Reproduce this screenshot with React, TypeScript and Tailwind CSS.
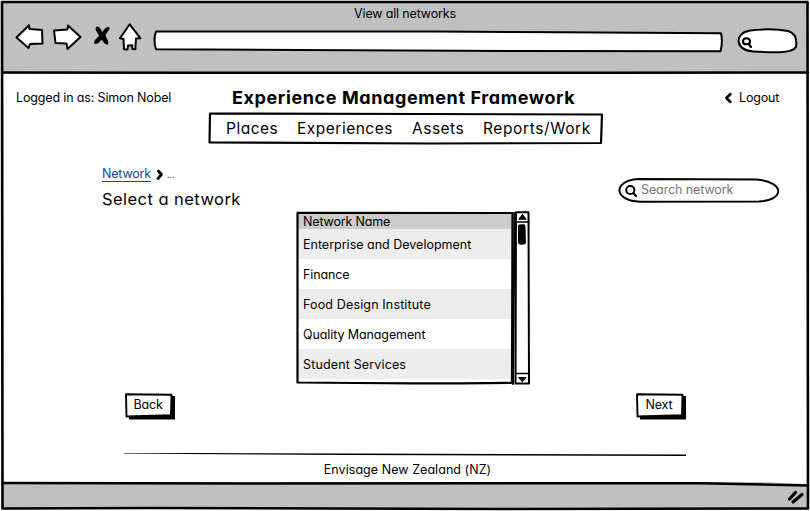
import type { ReactNode } from "react";

const networks = [
  { name: "Enterprise and Development", tracking: "tracking-[0px]" },
  { name: "Finance", tracking: "tracking-[-0.1px]" },
  { name: "Food Design Institute", tracking: "tracking-[0.15px]" },
  { name: "Quality Management", tracking: "tracking-[-0.1px]" },
  { name: "Student Services", tracking: "tracking-[0.15px]" },
];

const line = {
  fill: "none",
  stroke: "#000",
  strokeWidth: 2.3,
  strokeLinejoin: "round" as const,
  strokeLinecap: "round" as const,
};

function SketchButton({ children }: { children: ReactNode }) {
  return (
    <button className="relative h-[27px] w-[50px] text-[12.5px] tracking-[-0.15px]">
      <svg className="absolute inset-0" width="50" height="27" viewBox="0 0 50 27">
        <path d="M4 3H50V26.500H4Z" fill="#000" />
        <path d="M1 1.200L46.500 1.700L46 22.300L1.500 23.500Z" {...line} strokeWidth={1.900} fill="#fff" />
      </svg>
      <span className="relative block h-[27px] w-[46px] text-center leading-[23px]">{children}</span>
    </button>
  );
}

function BrowserBar() {
  return (
    <header className="h-[74px] shrink-0 bg-[#c0c0c0]">
      <div className="h-[22px] pt-[4px] text-center text-[12.5px] leading-[20px] tracking-[-0.15px]">
        <span>View all networks</span>
      </div>
      <div className="flex h-[32px] pl-[15px]">
        <svg width="29" height="32" viewBox="15 22 29 32">
          <path d="M16.500 37.500L29 25.300L29.500 29L42 30L42.500 43.500L30 44L28.500 48Z" {...line} strokeWidth={2} fill="#fff" />
        </svg>
        <svg className="ml-[8px]" width="31" height="32" viewBox="52 22 31 32">
          <path d="M54 30.500L67.500 29.500L68 25.500L80.500 37L67.500 49L66.500 43.500L55.500 43Z" {...line} strokeWidth={2} fill="#fff" />
        </svg>
        <svg className="ml-[10px]" width="18" height="32" viewBox="93 22 18 32">
          <path d="M97 26.500C99.500 26 101 29.500 102.500 32C104.500 28.500 107 26 109.500 27.500C110.500 29 106.500 32.500 105.500 35.500C106.500 38.500 109.500 42 108 44.500C105.500 45.500 103 41.500 101.500 39.500C99.500 42.500 97 45 94.200 43.500C93 41 97.500 38 99 35.500C97.500 32.500 93.500 28.500 97 26.500Z" fill="#000" />
        </svg>
        <svg className="ml-[7px]" width="25" height="32" viewBox="118 22 25 32">
          <path d="M129.700 24.300L140.300 38.200L136 38.500L135.300 49.300L132.300 49V45.300L128 45.500L127.500 49.500L124 49.300L123.500 39L120 38.200Z" {...line} strokeWidth={2} fill="#fff" />
        </svg>
        <svg className="ml-[9px]" width="572" height="32" viewBox="152 22 572 32">
          <path d="M157 31.500L435 31.600L560 32.200L721 33.300Q723 42 720.500 51.300L520 51L300 50L156 49.200Q153 40 156 31.500Z" {...line} strokeWidth={2} fill="#fff" />
        </svg>
        <svg className="ml-[12px]" width="63" height="32" viewBox="736 22 63 32">
          <path d="M750 30.500Q771 28 788 31Q798 34 796 47C792 54 771 52.500 752 51.300C735 50 734 33 750 30.500Z" {...line} strokeWidth={2} fill="#fff" />
          <path d="M748.500 44L751 47M743 42C742 37 750.500 37 750 42C749.500 45 743.500 45 743 42Z" {...line} strokeWidth={2.200} />
        </svg>
      </div>
    </header>
  );
}

function NetworkTable() {
  return (
    <div className="relative flex h-[174px] w-[234px] text-[12.5px]">
      <div className="ml-[2px] mt-[2px] h-[170px] w-[215px]">
        <div className="h-[16px] bg-[#cbcbcb] pl-[5px] leading-[17px] tracking-[-0.15px]">Network Name</div>
        {networks.map((row) => (
          <div key={row.name} className={`h-[30px] bg-white pl-[5px] leading-[31px] even:bg-[#ededed] ${row.tracking}`}>
            {row.name}
          </div>
        ))}
      </div>
      <svg className="absolute inset-0" width="234" height="174" viewBox="296 211 234 174">
        <path d="M297.500 212.800L512.500 213L512 382.800Q400 384 297.500 382.500Z" {...line} strokeWidth={2.200} />
        <path d="M514.500 213L513 384" {...line} strokeWidth={2} />
        <path d="M516 212.200H528.500L529 383.500H515.500Z" {...line} strokeWidth={2} fill="#fff" />
        <path d="M515 222H529M516 373.500H529" {...line} strokeWidth={1.700} />
        <path d="M519 219L522.500 214.500L526 219ZM519 377.500L526 377.500L522.500 381.500Z" {...line} strokeWidth={1} fill="#000" />
        <path d="M518 225.500Q518.500 224 524 224.300Q525.500 224.500 525.500 228L526 243Q525 245.500 520 244.500Q518 244.500 518 242Z" fill="#000" />
      </svg>
    </div>
  );
}

export default function App() {
  return (
    <main
      className="relative flex h-[511px] w-[810px] flex-col overflow-hidden bg-white font-['Inter','Noto_Sans',sans-serif] text-black"
      style={{ fontFeatureSettings: '"cv11"' }}
    >
      <BrowserBar />
      <section className="flex h-[38px] shrink-0 items-center pt-[9px] text-[12.5px] tracking-[-0.15px]">
        <span className="w-[232px] whitespace-nowrap pl-[16px] pt-[2px]">Logged in as: Simon Nobel</span>
        <h1 className="w-[492px] whitespace-nowrap text-[18px] font-bold leading-[24px] tracking-[0.6px]">
          Experience Management Framework
        </h1>
        <svg width="15" height="14" viewBox="724 91 15 14">
          <path d="M730.500 94L726.300 98L730.500 102" {...line} strokeWidth={2.500} />
        </svg>
        <span className="pt-[2px]">Logout</span>
      </section>
      <nav className="relative ml-[208px] h-[33px] w-[396px] shrink-0 text-[15.5px] leading-[33px] tracking-[0.5px]">
        <svg className="absolute inset-0" width="396" height="33" viewBox="208 112 396 33">
          <path d="M210 113.500L420 114L602 114.500L601 143L430 143.500L209.500 142.500Z" {...line} strokeWidth={2.200} />
        </svg>
        <div className="relative flex whitespace-nowrap pl-[18px]">
          <span className="w-[71px]">Places</span>
          <span className="w-[115px]">Experiences</span>
          <span className="w-[71px]">Assets</span>
          <span className="tracking-[0.6px]">Reports/Work</span>
        </div>
      </nav>
      <section className="flex h-[66px] shrink-0 justify-between pl-[102px] pr-[31px] pt-[20px]">
        <div>
          <div className="flex h-[18px] items-center text-[12.5px] leading-[17px] tracking-[-0.2px]">
            <a className="border-b border-[#0b4a8f] leading-[15px] text-[#0b4a8f]">Network</a>
            <svg className="ml-[5px]" width="9" height="14" viewBox="156 167 9 14">
              <path d="M158.300 171L161.500 174.500L158 178.500" {...line} strokeWidth={2.700} />
            </svg>
            <span className="ml-[2px] text-[10px] text-[#333]">...</span>
          </div>
          <h2 className="mt-[5px] text-[16.5px] leading-[22px] tracking-[0.45px]">Select a network</h2>
        </div>
        <div className="relative mt-[12px] h-[27px] w-[161px] text-[12.5px] tracking-[-0.1px]">
          <svg className="absolute inset-0" width="161" height="27" viewBox="618 177 161 27">
            <path d="M638 179L700 179.300L757 179.500C785 182 785 200 759 201.500L640 201.700C614 201 612 181 638 179Z" {...line} strokeWidth={2} />
            <circle cx="630.300" cy="190" r="4.100" {...line} strokeWidth={2} />
            <path d="M633.500 193.300L636 196" {...line} />
          </svg>
          <span className="relative block pl-[23px] leading-[25px] text-[#77777d]">Search network</span>
        </div>
      </section>
      <section className="flex h-[182px] shrink-0 pl-[296px]">
        <NetworkTable />
      </section>
      <section className="flex h-[27px] shrink-0 justify-between pl-[125px] pr-[124px]">
        <SketchButton>Back</SketchButton>
        <SketchButton>Next</SketchButton>
      </section>
      <footer className="flex h-[62px] shrink-0 flex-col items-center pl-[5px] pt-[32px] text-[12.5px] tracking-[0.05px]">
        <svg className="mr-[5px]" width="562" height="4" viewBox="124 452 562 4">
          <path d="M124 453L200 453L350 453.500L686 454.500V456L350 455L220 454.300L124 453.600Z" fill="#000" />
        </svg>
        <span className="mt-[4px] leading-[20px]">Envisage New Zealand (NZ)</span>
      </footer>
      <div className="flex flex-1 items-center justify-end bg-[#c0c0c0] pr-[5px]">
        <svg width="18" height="16" viewBox="787 490 18 16">
          <path d="M789.500 500L795.500 493.500M793 503L802 495.500" {...line} strokeWidth={3.200} />
        </svg>
      </div>
      <svg className="pointer-events-none absolute inset-0" width="810" height="511" viewBox="0 0 810 511">
        <path d="M0 0H810V511H0ZM2 2V509H808V2Z" fill="#fff" fillRule="evenodd" />
        <path d="M3 482H760L807 484V482Z" fill="#fff" />
        <path d="M2 2L807.500 2L808 508.500L500 509L150 508L2.500 508.500Z" {...line} strokeWidth={2.600} />
        <path d="M3 72.500L200 72.700L610 72.800L808 72.500M3 483L250 483.500L700 483.200L808 485.500" {...line} strokeWidth={2.500} />
      </svg>
    </main>
  );
}
